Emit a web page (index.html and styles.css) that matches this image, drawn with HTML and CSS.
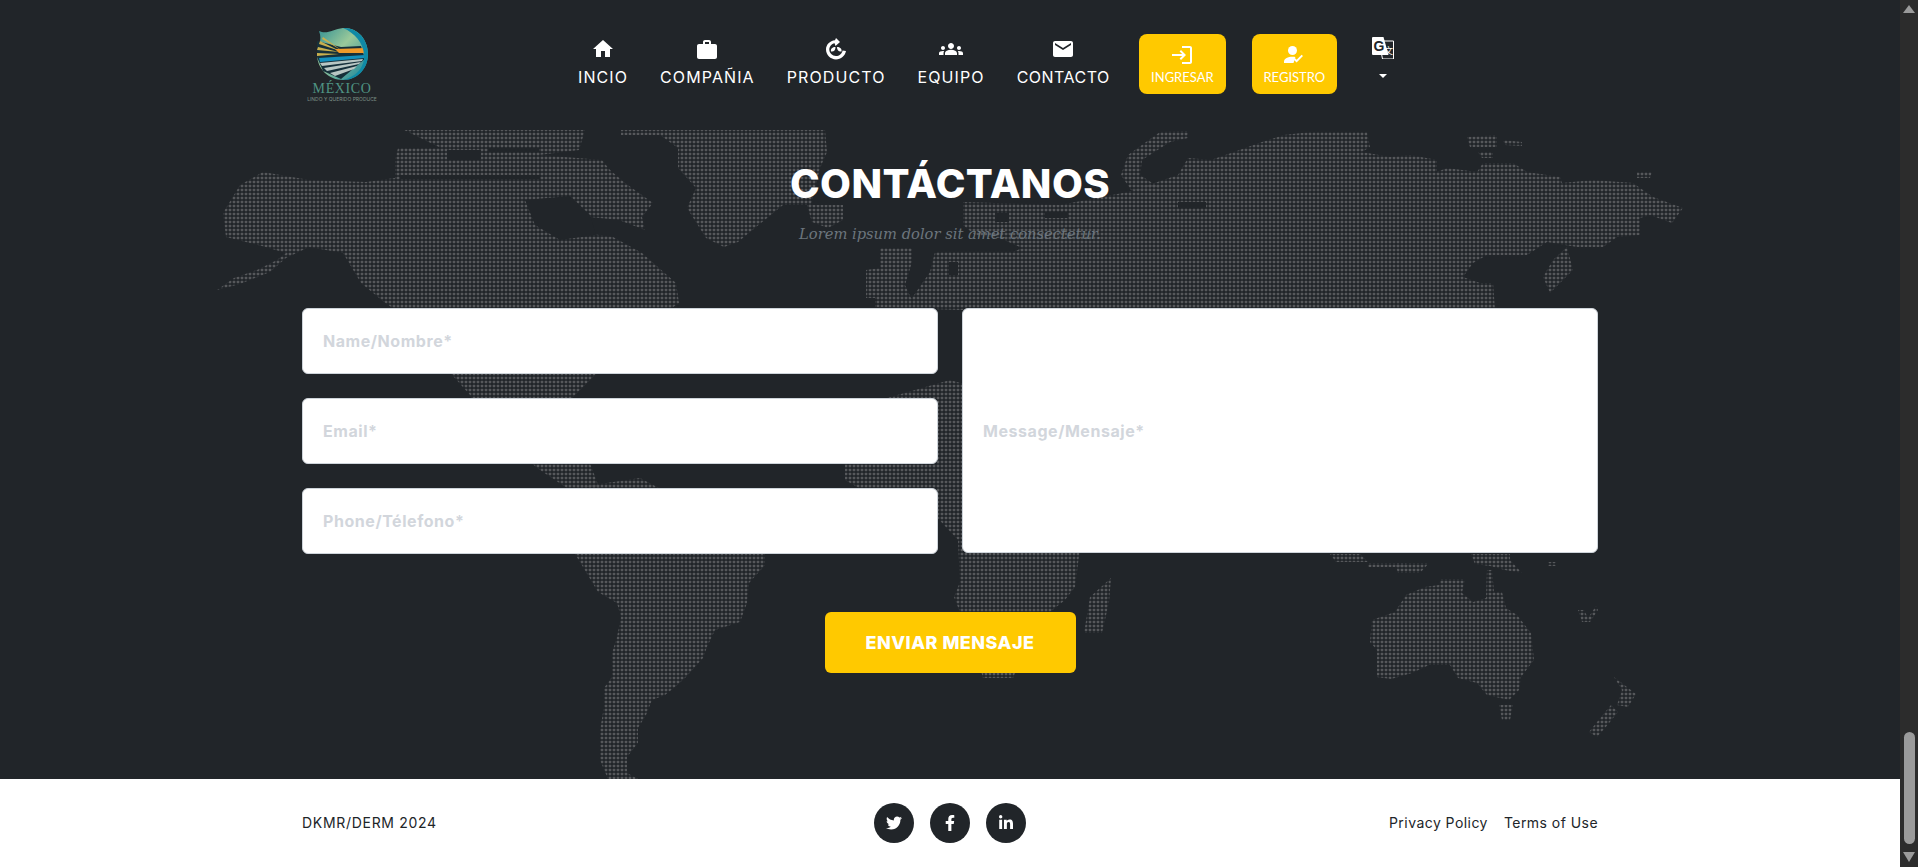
FILE: index.html
```html
<!DOCTYPE html>
<html lang="es">
<head>
    <meta charset="UTF-8">
    <meta name="viewport" content="width=device-width, initial-scale=1.0">
    <title>Contáctanos</title>
    <link rel="stylesheet" href="styles.css">
</head>
<body>
    <div class="page">
        <!-- Top navigation -->
        <header class="topbar">
            <a class="logo" href="#">
                <svg class="logo-mark" viewBox="0 0 54 54" width="54" height="54">
                    <defs>
                        <linearGradient id="logoSky" x1="0" y1="0" x2="1" y2="1">
                            <stop offset="0" stop-color="#2f8f93"/>
                            <stop offset="0.42" stop-color="#9ac99a"/>
                            <stop offset="1" stop-color="#0f7f9c"/>
                        </linearGradient>
                    </defs>
                    <path d="M4 4 C12 8 18 2 28 1 C42 0 53 12 53 27 C53 42 42 53 28 53 C14 53 2 42 2 27 C2 20 8 14 4 4Z" fill="url(#logoSky)"/>
                    <path d="M2 14 L26 20 L46 19 L50 32 L26 52 L8 44 L2 30Z" fill="#16303a"/>
                    <path d="M3 20 L24 25 L2 23ZM2 26 L24 27 L2 29ZM5 14 L25 24 L4 17ZM8 10 L26 23 L7 12Z" fill="#c9b04e"/>
                    <path d="M20 22 L50 21 L51 26 L24 26Z" fill="#f09a2a"/>
                    <path d="M4 31 L50 28 L50 31 L5 35Z" fill="#1390bd"/>
                    <path d="M5 36 L48 32 L47 34 L7 39ZM9 41 L46 35 L44 37 L12 44ZM15 46 L42 39 L39 42 L20 49Z" fill="#b9c7c4"/>
                    <path d="M28 1 C42 0 53 12 53 27 C53 42 42 53 28 53 C44 49 50 38 49 27 C48 16 40 6 28 1Z" fill="#0f8aa6"/>
                </svg>
                <span class="logo-name">MÉXICO</span>
                <span class="logo-tag">LINDO Y QUERIDO PRODUCE</span>
            </a>

            <nav class="nav">
                <a class="nav-link" href="#">
                    <svg class="nav-icon" viewBox="0 0 24 24"><path d="M10 20v-6h4v6h5v-8h3L12 3 2 12h3v8z"/></svg>
                    <span>INCIO</span>
                </a>
                <a class="nav-link" href="#">
                    <svg class="nav-icon" viewBox="0 0 24 24"><path d="M20 7h-4V5c0-1.1-.9-2-2-2h-4c-1.1 0-2 .9-2 2v2H4c-1.1 0-2 .9-2 2v11c0 1.1.9 2 2 2h16c1.1 0 2-.9 2-2V9c0-1.1-.9-2-2-2zm-6 0h-4V5h4v2z"/></svg>
                    <span>COMPAÑIA</span>
                </a>
                <a class="nav-link" href="#">
                    <svg class="nav-icon" viewBox="0 0 24 24">
                        <path d="M12 1l-1 2.2C5.8 3.7 2 7.6 2 12.6 2 18 6.500 22.500 12 22.500c5 0 9-3.600 10-8.500l-3.400-.6c-.7 3.200-3.400 5.600-6.600 5.600-3.700 0-6.700-3-6.700-6.400 0-3.200 2.200-5.800 5.300-6.400L11.500 9 16 5z"/>
                        <path d="M11.500 10c-3 0-5 1.600-4.500 4.500 2.500.6 4.500-1 4.500-4.500zM13 10c0 3 1.500 5 4.500 4.500.5-2.800-1.500-4.500-4.500-4.500z"/>
                    </svg>
                    <span>PRODUCTO</span>
                </a>
                <a class="nav-link" href="#">
                    <svg class="nav-icon" viewBox="0 0 24 24"><path d="M12 12.750c1.630 0 3.070.39 4.240.9 1.080.48 1.760 1.560 1.760 2.730V18H6v-1.610c0-1.180.68-2.260 1.760-2.730 1.170-.52 2.610-.91 4.240-.91zM4 13c1.100 0 2-.9 2-2s-.9-2-2-2-2 .9-2 2 .9 2 2 2zm1.130 1.100c-.37-.06-.74-.1-1.130-.1-.99 0-1.930.21-2.780.58C.48 14.900 0 15.620 0 16.430V18h4.500v-1.610c0-.83.23-1.610.63-2.290zM20 13c1.100 0 2-.9 2-2s-.9-2-2-2-2 .9-2 2 .9 2 2 2zm4 3.430c0-.81-.48-1.530-1.220-1.850-.85-.37-1.790-.58-2.780-.58-.39 0-.76.04-1.130.1.4.68.63 1.460.63 2.290V18H24v-1.570zM12 6c1.660 0 3 1.340 3 3s-1.340 3-3 3-3-1.340-3-3 1.340-3 3-3z"/></svg>
                    <span>EQUIPO</span>
                </a>
                <a class="nav-link nav-link-tight" href="#">
                    <svg class="nav-icon" viewBox="0 0 24 24"><path d="M20 4H4c-1.100 0-1.990.9-1.990 2L2 18c0 1.100.9 2 2 2h16c1.100 0 2-.9 2-2V6c0-1.100-.9-2-2-2zm0 4l-8 5-8-5V6l8 5 8-5v2z"/></svg>
                    <span>CONTACTO</span>
                </a>

                <a class="nav-btn nav-btn-login" href="#">
                    <svg class="nav-icon" viewBox="0 0 24 24"><path d="M11 7L9.600 8.400l2.600 2.600H2v2h10.200l-2.600 2.600L11 17l5-5-5-5zm9 12h-8v2h8c1.100 0 2-.9 2-2V5c0-1.100-.9-2-2-2h-8v2h8v14z"/></svg>
                    <span>INGRESAR</span>
                </a>
                <a class="nav-btn nav-btn-register" href="#">
                    <svg class="nav-icon" viewBox="0 0 24 24">
                        <circle cx="10.500" cy="7.500" r="4.500"/>
                        <path d="M2 20v-1.500c0-3 4-4.800 8.500-4.800 1 0 2 .1 2.900.3L11.500 20z"/>
                        <path d="M14.600 19.500l-3.100-3.100 1.400-1.400 1.700 1.700 5-5 1.400 1.400z"/>
                    </svg>
                    <span>REGISTRO</span>
                </a>

                <div class="lang">
                    <svg class="lang-icon" viewBox="0 0 22 22" width="22" height="22">
                        <path d="M7 4h14.500v18H10.500z" fill="#212529" stroke="#fff" stroke-width="1"/>
                        <path d="M1 0h10.500l5 18H1a1 1 0 0 1-1-1V1a1 1 0 0 1 1-1z" fill="#fff"/>
                        <text class="lang-g" x="1.500" y="14">G</text>
                        <text class="lang-zh" x="12" y="17">文</text>
                    </svg>
                    <span class="caret"></span>
                </div>
            </nav>
        </header>

        <!-- Contact form over the dotted map -->
        <main class="contact">
            <svg class="world-map" viewBox="0 0 1900 779" width="1900" height="779" aria-hidden="true">
                <defs>
                    <pattern id="dots" x="0" y="0" width="4" height="4" patternUnits="userSpaceOnUse">
                        <rect x="0.700" y="0.700" width="2.600" height="2.600" rx="0.800" fill="#56585b"/>
                    </pattern>
                </defs>
                <g fill="url(#dots)">
                    <!-- north america -->
                    <polygon points="217,290 234,278 257,270 277,260 286,253 262,246 226,237 223,213 240,185 263,172 309,180 366,182 395,178 395,160 398,148 441,148 404,130 585,130 579,150 539,155 602,160 610,170 625,183 653,203 642,217 645,230 619,220 590,217 567,208 550,217 556,227 567,235 585,233 613,237 642,253 676,283 679,303 640,330 600,370 570,400 585,450 600,490 570,490 540,470 490,430 470,395 430,350 410,320 384,302 361,283 343,253 309,247 286,258 270,272 240,284"/>
                    <!-- greenland, iceland -->
                    <polygon points="621,130 825,130 827,152 820,168 811,205 783,205 738,242 724,247 706,238 687,208 696,188 678,168 678,148 660,135 621,135"/>
                    <polygon points="807,205 843,205 843,220 828,228 812,222"/>
                    <!-- south america -->
                    <polygon points="560,490 640,478 700,510 765,554 765,565 749,583 747,603 740,622 715,630 707,647 703,658 686,677 675,687 665,695 652,700 646,715 638,728 638,743 627,757 627,773 638,779 608,779 600,760 600,730 604,707 604,688 612,677 612,653 617,637 621,617 617,603 598,592 583,567 575,554"/>
                    <!-- uk -->
                    <polygon points="880,248 912,248 912,262 905,285 911,298 866,298 866,270 880,268"/>
                    <!-- arctic arc -->
                    <polygon points="1188,131 1160,132 1128,155 1121,175 1131,190 1160,188 1140,175 1142,160 1170,142 1188,138"/>
                    <!-- eurasia -->
                    <polygon points="1259,143 1284,135 1310,132 1367,132 1370,147 1362,152 1390,157 1410,155 1437,160 1437,172 1447,168 1477,172 1483,163 1513,163 1527,172 1560,177 1562,183 1593,180 1633,183 1653,197 1683,208 1672,223 1650,215 1640,218 1640,235 1617,237 1603,247 1577,247 1547,242 1527,255 1487,255 1473,263 1463,277 1480,283 1493,283 1495,310 1480,340 1440,400 1400,440 1360,420 1330,440 1290,380 1230,390 1180,340 1120,330 1060,310 960,310 875,307 875,298 912,298 930,272 935,252 995,252 1013,252 1022,248 1000,238 975,235 963,225 963,202 1060,205 1128,192 1178,175 1188,158 1211,160 1234,152"/>
                    <polygon points="1567,247 1573,270 1550,293 1543,277 1553,260"/>
                    <polygon points="1467,137 1497,135 1497,147 1470,147"/>
                    <polygon points="1503,140 1522,142 1522,146 1505,145"/>
                    <polygon points="1478,152 1493,152 1493,158 1482,158"/>
                    <polygon points="1637,172 1652,172 1650,178 1637,178"/>
                    <!-- africa -->
                    <polygon points="845,440 880,400 950,380 1020,400 1090,470 1075,587 1065,600 1040,620 1020,660 1013,678 983,678 975,650 954,597 960,582 958,540 930,510 880,500 845,480"/>
                    <polygon points="1111,578 1109,602 1102,633 1084,633 1090,597"/>
                    <!-- indonesia -->
                    <polygon points="1330,554 1360,554 1368,562 1336,562"/>
                    <polygon points="1368,563 1406,563 1406,567 1368,567"/>
                    <polygon points="1395,563 1429,563 1420,573 1398,573"/>
                    <polygon points="1471,554 1510,554 1510,560 1522,573 1505,570 1490,566 1475,564"/>
                    <polygon points="1548,562 1556,562 1556,566 1548,566"/>
                    <!-- australia, tasmania, new zealand -->
                    <polygon points="1441,579 1465,579 1462,593 1473,602 1486,598 1487,570 1492,570 1494,592 1502,592 1506,608 1517,615 1531,633 1534,660 1521,677 1519,690 1509,700 1487,695 1477,683 1458,678 1450,665 1429,665 1412,673 1391,679 1377,677 1377,650 1370,642 1372,620 1395,612 1406,595 1425,587 1439,585"/>
                    <polygon points="1499,705 1513,705 1510,720 1502,720"/>
                    <polygon points="1614,677 1636,694 1628,707 1617,705 1622,690"/>
                    <polygon points="1611,705 1618,712 1605,728 1597,737 1589,732 1597,722"/>
                    <polygon points="1578,610 1584,610 1588,618 1596,606 1598,610 1590,622 1582,622"/>
                </g>
                <!-- bays and channels cut back out of the land -->
                <g fill="#212529">
                    <polygon points="447,150 481,150 481,160 447,160"/>
                    <polygon points="488,148 539,148 539,152 488,152"/>
                    <polygon points="400,175 540,175 540,179 400,179"/>
                    <polygon points="525,200 570,196 590,215 596,235 560,240 535,225"/>
                    <polygon points="995,213 1009,213 1009,222 995,222"/>
                    <polygon points="1045,212 1068,212 1068,218 1045,218"/>
                    <polygon points="1178,202 1206,202 1206,208 1178,208"/>
                    <polygon points="949,262 958,262 958,275 949,275"/>
                </g>
            </svg>

            <div class="container">
                <h1 class="contact-title">CONTÁCTANOS</h1>
                <p class="contact-subtitle">Lorem ipsum dolor sit amet consectetur.</p>

                <form class="contact-form">
                    <div class="form-col">
                        <input class="field" type="text" placeholder="Name/Nombre*">
                        <input class="field" type="email" placeholder="Email*">
                        <input class="field" type="tel" placeholder="Phone/Télefono*">
                    </div>
                    <div class="form-col">
                        <textarea class="field field-message" placeholder="Message/Mensaje*"></textarea>
                    </div>
                    <div class="form-action">
                        <button class="send-btn" type="button">ENVIAR MENSAJE</button>
                    </div>
                </form>
            </div>
        </main>

        <footer class="footer">
            <div class="container footer-row">
                <div class="footer-copy">DKMR/DERM 2024</div>
                <div class="socials">
                    <a class="social" href="#"><svg viewBox="0 0 512 512" width="16" height="16"><path d="M459.370 151.716c.325 4.548.325 9.097.325 13.645 0 138.720-105.583 298.558-298.558 298.558-59.452 0-114.680-17.219-161.137-47.106 8.447.974 16.568 1.299 25.340 1.299 49.055 0 94.213-16.568 130.274-44.832-46.132-.975-84.792-31.188-98.112-72.772 6.498.974 12.995 1.624 19.818 1.624 9.421 0 18.843-1.300 27.614-3.573-48.081-9.747-84.143-51.980-84.143-102.985v-1.299c13.969 7.797 30.214 12.670 47.431 13.319-28.264-18.843-46.781-51.005-46.781-87.391 0-19.492 5.197-37.360 14.294-52.954 51.655 63.675 129.300 105.258 216.365 109.807-1.624-7.797-2.599-15.918-2.599-24.040 0-57.828 46.782-104.934 104.934-104.934 30.213 0 57.502 12.670 76.670 33.137 23.715-4.548 46.456-13.320 66.599-25.340-7.798 24.366-24.366 44.833-46.132 57.827 21.117-2.273 41.584-8.122 60.426-16.243-14.292 20.791-32.161 39.308-52.628 54.253z"/></svg></a>
                    <a class="social" href="#"><svg viewBox="0 0 320 512" width="10" height="16"><path d="M279.140 288l14.220-92.660h-88.910v-60.130c0-25.350 12.420-50.060 52.240-50.060h40.420V6.260S260.430 0 225.360 0c-73.220 0-121.080 44.380-121.080 124.720v70.620H22.890V288h81.390v224h100.170V288z"/></svg></a>
                    <a class="social" href="#"><svg viewBox="0 0 448 512" width="14" height="16"><path d="M100.280 448H7.400V148.900h92.880zM53.790 108.100C24.090 108.100 0 83.500 0 53.800a53.790 53.790 0 0 1 107.580 0c0 29.700-24.100 54.300-53.790 54.300zM447.900 448h-92.680V302.400c0-34.700-.7-79.200-48.290-79.200-48.290 0-55.690 37.700-55.690 76.700V448h-92.780V148.900h89.080v40.800h1.300c12.400-23.500 42.690-48.300 87.880-48.300 94 0 111.280 61.900 111.280 142.300V448z"/></svg></a>
                </div>
                <div class="footer-links">
                    <a href="#">Privacy Policy</a>
                    <a href="#">Terms of Use</a>
                </div>
            </div>
        </footer>
    </div>

    <!-- Window scrollbar as it shows in the capture -->
    <div class="scrollbar">
        <span class="scroll-up"></span>
        <span class="scroll-thumb"></span>
        <span class="scroll-down"></span>
    </div>
</body>
</html>
```
FILE: styles.css
```css
* {
    box-sizing: border-box;
}

html, body {
    height: 100%;
    margin: 0;
}

body {
    display: flex;
    height: 867px;
    overflow: hidden;
    font-family: Inter, "Noto Sans", sans-serif;
    background-color: #212529;
    color: #212529;
}

a {
    color: inherit;
    text-decoration: none;
}

.page {
    flex: 1;
    min-width: 0;
    display: flex;
    flex-direction: column;
}

.container {
    width: 1296px;
    margin: 0 auto;
}

/* Header */
.topbar {
    height: 110px;
    width: 1296px;
    margin: 0 auto;
    display: flex;
    padding: 27px 0 0 4px;
    background-color: #212529;
    position: relative;
    z-index: 1;
}

.logo {
    width: 72px;
    display: flex;
    flex-direction: column;
    align-items: center;
}

.logo-mark {
    display: block;
}

.logo-name {
    margin-top: 1px;
    font-family: "Liberation Serif", serif;
    font-size: 14px;
    line-height: 14px;
    letter-spacing: 0.6px;
    color: #4f9383;
}

.logo-tag {
    font-size: 5px;
    line-height: 6px;
    white-space: nowrap;
    color: #7d9087;
}

.nav {
    margin-left: 200px;
    display: flex;
    align-items: flex-start;
    color: #fff;
}

.nav-link {
    margin-right: 32px;
    display: flex;
    flex-direction: column;
    align-items: center;
    font-size: 16px;
    font-weight: 400;
    letter-spacing: 1.1px;
    line-height: 20px;
    white-space: nowrap;
}

.nav-link-tight {
    letter-spacing: 0.5px;
}

.nav-icon {
    width: 24px;
    height: 24px;
    fill: #fff;
    display: block;
}

.nav-link .nav-icon {
    margin: 10px 0 6px;
}

.nav-btn {
    height: 60px;
    margin-top: 7px;
    padding-top: 9px;
    display: flex;
    flex-direction: column;
    align-items: center;
    gap: 2px;
    border-radius: 8px;
    background-color: #ffc900;
    font-family: Lato, sans-serif;
    font-size: 13px;
    line-height: 16px;
}

.nav-btn-login {
    width: 87px;
    margin-left: -3px;
    margin-right: 26px;
}

.nav-btn-register {
    width: 85px;
    margin-right: 35px;
}

.lang {
    width: 22px;
    padding-top: 10px;
    display: flex;
    flex-direction: column;
    align-items: center;
}

.lang-icon {
    display: block;
}

.lang-g {
    font-family: "Liberation Sans", sans-serif;
    font-size: 14px;
    font-weight: 700;
    fill: #212529;
}

.lang-zh {
    font-family: "Noto Sans CJK SC", sans-serif;
    font-size: 9px;
    fill: #fff;
}

.caret {
    margin-top: 15px;
    width: 0;
    height: 0;
    border-top: 4px solid #fff;
    border-left: 4px solid transparent;
    border-right: 4px solid transparent;
}

/* Contact section */
.contact {
    flex: 1;
    position: relative;
    padding-top: 50px;
    background-color: #212529;
}

.world-map {
    position: absolute;
    top: -110px;
    left: 0;
}

.contact .container {
    position: relative;
}

.contact-title {
    margin: 0;
    text-align: center;
    font-size: 40px;
    line-height: 48px;
    font-weight: 800;
    letter-spacing: 0.4px;
    color: #fff;
}

.contact-subtitle {
    margin: 14px 0 0;
    text-align: center;
    font-family: "DejaVu Serif", serif;
    font-style: italic;
    font-size: 14.7px;
    line-height: 24px;
    color: #6c757d;
}

.contact-form {
    margin-top: 62px;
    display: grid;
    grid-template-columns: 1fr 1fr;
    column-gap: 24px;
}

.form-col {
    display: flex;
    flex-direction: column;
    gap: 24px;
}

.field {
    width: 100%;
    height: 66px;
    padding: 0 20px;
    border: 1px solid #ced4da;
    border-radius: 6px;
    background-color: #fff;
    font-family: inherit;
    font-size: 16px;
    font-weight: 700;
    letter-spacing: 0.55px;
    outline: none;
    display: block;
}

.field::placeholder {
    color: #d2d6dc;
    opacity: 1;
}

.field-message {
    height: 245px;
    padding-top: 112px;
    resize: none;
}

.form-action {
    grid-column: 1 / -1;
    margin-top: 58px;
    display: flex;
    justify-content: center;
}

.send-btn {
    width: 251px;
    height: 61px;
    border: 0;
    border-radius: 6px;
    background-color: #ffc900;
    color: #fff;
    font-family: inherit;
    font-size: 18px;
    font-weight: 800;
    letter-spacing: 0.5px;
}

/* Footer */
.footer {
    height: 88px;
    position: relative;
    background-color: #fff;
    font-size: 14px;
    letter-spacing: 0.45px;
}

.footer-row {
    height: 100%;
    display: grid;
    grid-template-columns: 1fr auto 1fr;
    align-items: center;
}

.footer-copy {
    padding-bottom: 2px;
    letter-spacing: 0.7px;
}

.socials {
    display: flex;
    gap: 16px;
}

.social {
    width: 40px;
    height: 40px;
    border-radius: 50%;
    background-color: #212529;
    display: flex;
    align-items: center;
    justify-content: center;
}

.social svg {
    fill: #fff;
}

.footer-links {
    padding-bottom: 2px;
    display: flex;
    justify-content: flex-end;
    gap: 16px;
}

/* Scrollbar */
.scrollbar {
    width: 18px;
    flex: none;
    position: relative;
    display: flex;
    flex-direction: column;
    align-items: center;
    background-color: #2c2c2c;
}

.scroll-up {
    margin-top: 5px;
    width: 0;
    height: 0;
    border-bottom: 8px solid #9b9b9b;
    border-left: 6px solid transparent;
    border-right: 6px solid transparent;
}

.scroll-thumb {
    margin-top: auto;
    width: 11px;
    height: 112px;
    border-radius: 6px;
    background-color: #9b9b9b;
}

.scroll-down {
    margin: 8px 0 5px;
    width: 0;
    height: 0;
    border-top: 10px solid #9b9b9b;
    border-left: 6px solid transparent;
    border-right: 6px solid transparent;
}
```
